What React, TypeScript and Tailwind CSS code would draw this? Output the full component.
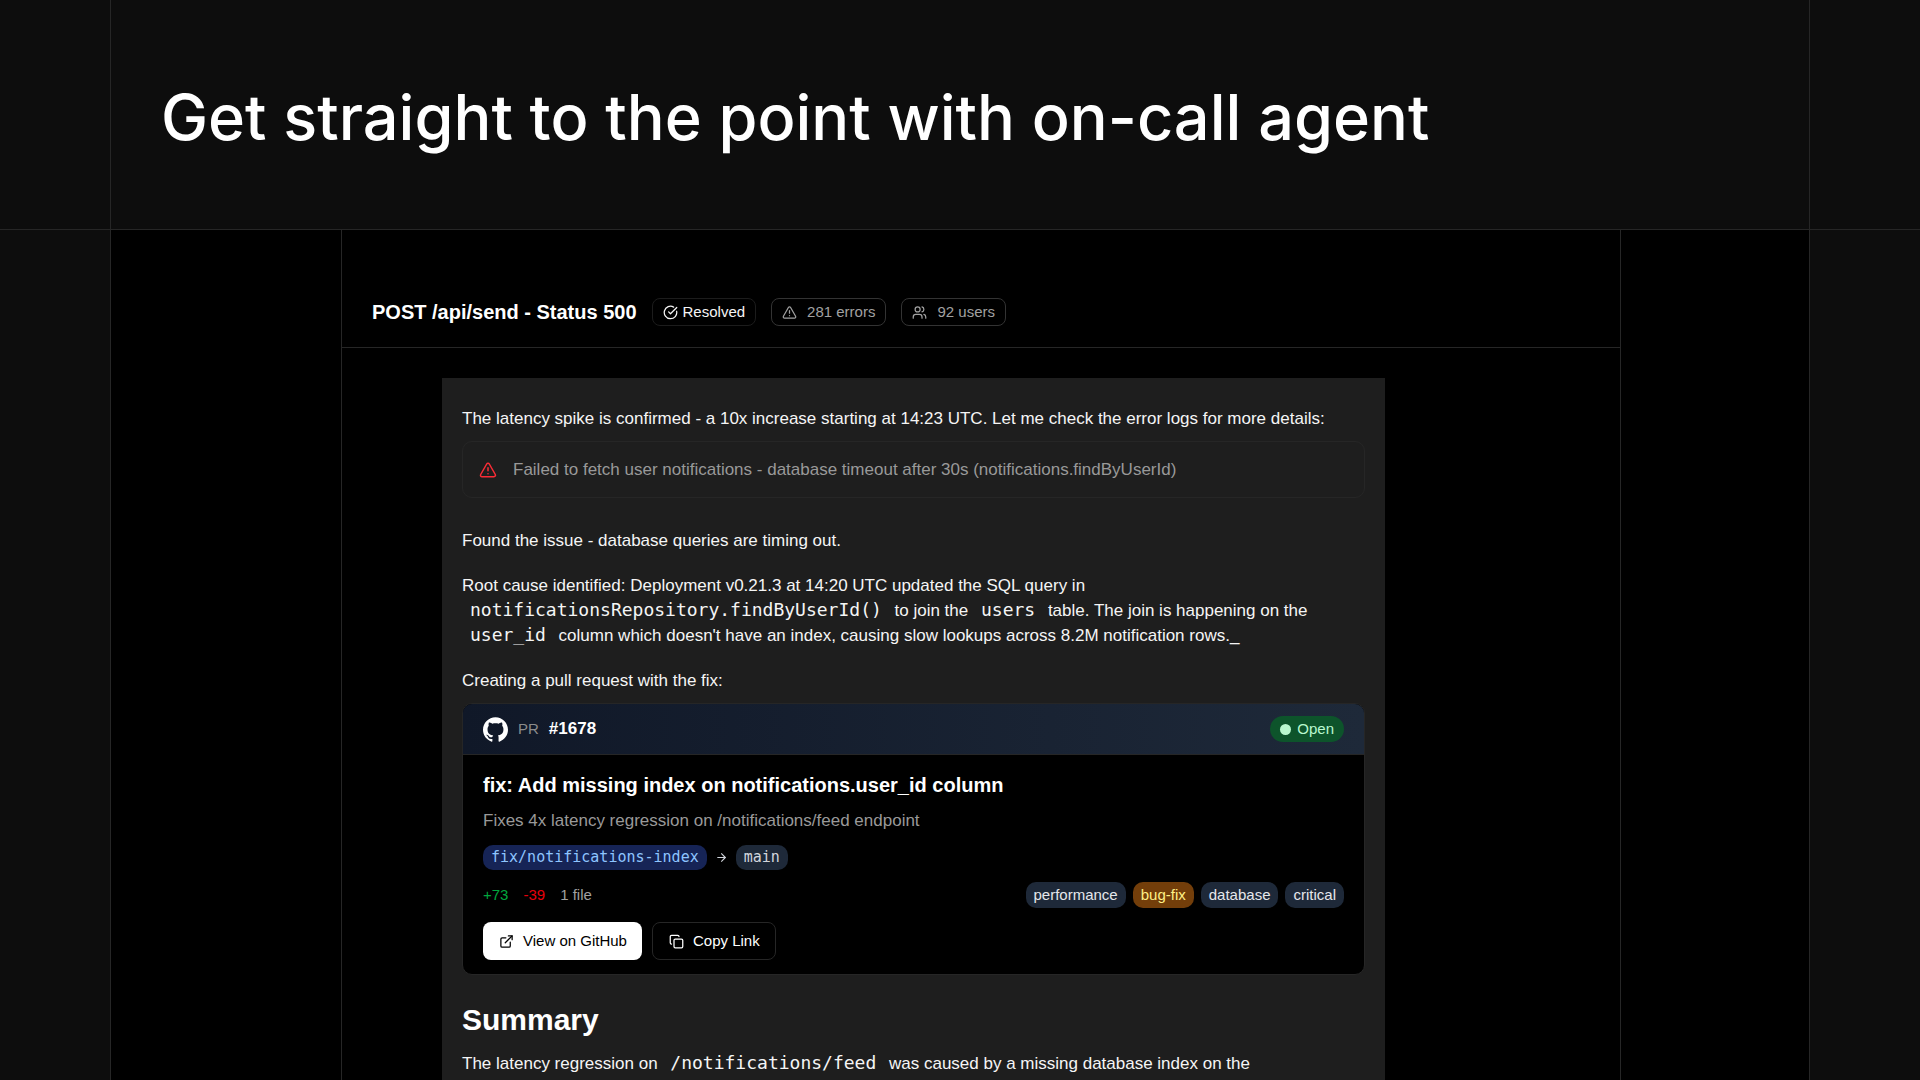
import type { ReactNode } from 'react';
import { ArrowRight, CircleCheckBig, Copy, ExternalLink, TriangleAlert, Users } from 'lucide-react';
import { SiGithub } from 'react-icons/si';

type Label = { name: string; highlight?: boolean };

const LABELS: Label[] = [
  { name: 'performance' },
  { name: 'bug-fix', highlight: true },
  { name: 'database' },
  { name: 'critical' },
];

function Code({ children }: { children: ReactNode }) {
  return <code className="px-2 font-['DejaVu_Sans_Mono',monospace] text-[18px] leading-[20px]">{children}</code>;
}

function labelClass(highlight?: boolean) {
  return highlight ? 'bg-[#733e0a] text-[#fff085]' : 'bg-[#1e2939] text-gray-200';
}

function PullRequestCard() {
  return (
    <article className="mt-[10px] overflow-hidden rounded-[10px] border border-[#262626] bg-black">
      <div className="flex items-center justify-between border-b border-[#262626] bg-linear-to-r from-[#101828] to-[#1e2939] px-5 py-3">
        <div className="flex items-center gap-[10px]">
          <SiGithub className="size-[25px] text-white" />
          <span className="text-[15px] leading-[26px] text-[#8c8c8c]">PR</span>
          <span className="text-[17px] leading-[26px] font-bold text-white">#1678</span>
        </div>
        <span className="flex items-center gap-[6px] rounded-full bg-[#0d542b] px-[10px] text-[15px] leading-[26px] text-[#b9f8cf]">
          <span className="size-[11px] rounded-full bg-[#b9f8cf]" />
          Open
        </span>
      </div>

      <div className="px-5 pt-4 pb-[14px]">
        <h3 className="text-[20px] leading-[28px] font-bold text-white">
          fix: Add missing index on notifications.user_id column
        </h3>
        <p className="mt-[9px] text-[17px] leading-[25px] text-[#999999]">
          Fixes 4x latency regression on /notifications/feed endpoint
        </p>

        <div className="mt-3 flex items-center gap-2 font-['DejaVu_Sans_Mono',monospace] text-[15px] leading-[25px]">
          <span className="rounded-[10px] bg-[#162456] px-2 text-[#8ec5ff]">fix/notifications-index</span>
          <ArrowRight className="size-[13px] text-gray-300" />
          <span className="rounded-[10px] bg-[#1e2939] px-2 text-gray-300">main</span>
        </div>

        <div className="mt-3 flex items-center justify-between text-[15px] leading-[26px]">
          <div className="flex gap-[15px]">
            <span className="text-[#00a63e]">+73</span>
            <span className="text-[#e7000b]">-39</span>
            <span className="text-[#a1a1a1]">1 file</span>
          </div>
          <div className="flex gap-[7px]">
            {LABELS.map((label) => (
              <span key={label.name} className={`rounded-[10px] px-2 ${labelClass(label.highlight)}`}>
                {label.name}
              </span>
            ))}
          </div>
        </div>

        <div className="mt-[14px] flex gap-[10px] text-[15px] leading-[22px]">
          <button
            type="button"
            className="flex items-center gap-[9px] rounded-[8px] bg-white py-2 pr-[15px] pl-4 text-black"
          >
            <ExternalLink className="size-[15px]" />
            View on GitHub
          </button>
          <button
            type="button"
            className="flex items-center gap-[9px] rounded-[8px] border border-[#262626] py-[7px] pr-[15px] pl-4 text-white"
          >
            <Copy className="size-[15px]" />
            Copy Link
          </button>
        </div>
      </div>
    </article>
  );
}

export default function App() {
  return (
    <main className="flex h-screen flex-col overflow-hidden bg-[#0d0d0d] font-['Liberation_Sans',Arial,sans-serif] text-[#f5f5f5]">
      <div className="border-b border-[#262626] px-[110px]">
        <div className="border-x border-[#262626] px-[50px] pt-[77px] pb-[72px]">
          <h1 className="font-[Inter,sans-serif] text-[63px] leading-[80px] font-medium text-white">
            Get straight to the point with on-call agent
          </h1>
        </div>
      </div>

      <div className="flex min-h-0 grow px-[110px]">
        <div className="grow border-x border-[#262626] bg-black pr-[188px] pl-[230px]">
          <section className="h-full border-x border-[#262626]">
            <header className="flex items-center gap-[15px] border-b border-[#262626] px-[30px] pt-[68px] pb-[21px] text-[15px] leading-[26px]">
              <h2 className="text-[20px] leading-[28px] font-bold text-white">POST /api/send - Status 500</h2>
              <span className="flex items-center gap-[5px] rounded-[8px] border border-[#1c1c1c] px-[10px]">
                <CircleCheckBig className="size-[15px]" />
                Resolved
              </span>
              <span className="flex items-center gap-[10px] rounded-[8px] border border-[#333333] px-[10px] text-[#a1a1a1]">
                <TriangleAlert className="size-[15px]" />
                281 errors
              </span>
              <span className="flex items-center gap-[10px] rounded-[8px] border border-[#333333] px-[10px] text-[#a1a1a1]">
                <Users className="size-[15px]" />
                92 users
              </span>
            </header>

            <div className="mt-[30px] mr-[235px] ml-[100px] bg-[#1e1e1e] px-5 pt-[28px] pb-10 text-[17px] leading-[25px]">
              <p>
                The latency spike is confirmed - a 10x increase starting at 14:23 UTC. Let me check the error logs for
                more details:
              </p>
              <div className="mt-[10px] flex items-center gap-4 rounded-[10px] border border-[#262626] px-4 py-[15px] text-[#999999]">
                <TriangleAlert className="size-[18px] text-[#fb2c36]" />
                <p>Failed to fetch user notifications - database timeout after 30s (notifications.findByUserId)</p>
              </div>
              <p className="mt-[30px]">Found the issue - database queries are timing out.</p>
              <p className="mt-5">
                Root cause identified: Deployment v0.21.3 at 14:20 UTC updated the SQL query in{' '}
                <Code>notificationsRepository.findByUserId()</Code> to join the <Code>users</Code> table. The join is
                happening on the <Code>user_id</Code> column which doesn't have an index, causing slow lookups across
                8.2M notification rows._
              </p>
              <p className="mt-5">Creating a pull request with the fix:</p>
              <PullRequestCard />
              <h2 className="mt-[25px] text-[30px] leading-[40px] font-bold text-white">Summary</h2>
              <p className="mt-[11px]">
                The latency regression on <Code>/notifications/feed</Code> was caused by a missing database index on the
              </p>
            </div>
          </section>
        </div>
      </div>
    </main>
  );
}
